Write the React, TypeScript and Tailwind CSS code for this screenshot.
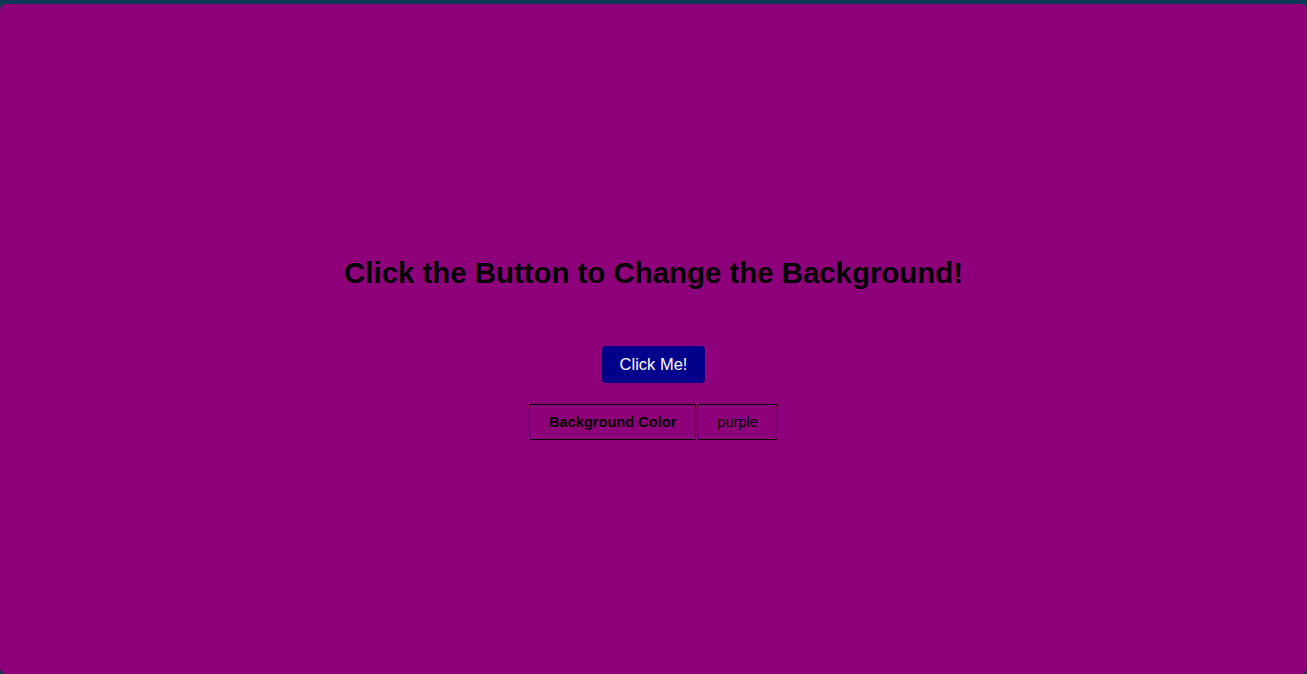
import { useState } from "react";

const colors = ["purple", "teal", "orange", "crimson"];
const hex: Record<string, string> = {
  purple: "#8e007a",
  teal: "#008080",
  orange: "#ffa500",
  crimson: "#dc143c",
};

export default function App() {
  const [idx, setIdx] = useState(0);
  const color = colors[idx];

  return (
    <div className="h-[674px] w-full bg-[#0c3a55] pt-[4px] font-['Liberation_Sans',Arial,sans-serif]">
      <div
        className="flex h-[670px] flex-col items-center rounded-[6px] pt-[252px] text-black"
        style={{ backgroundColor: hex[color] }}
      >
        <h1 className="text-[29.4px] font-bold leading-[33px]">
          Click the Button to Change the Background!
        </h1>
        <button
          onClick={() => setIdx((idx + 1) % colors.length)}
          className="mt-[57px] rounded-[4px] bg-[#00008b] px-[18px] py-[9px] text-[16.5px] leading-[19px] text-white"
        >
          Click Me!
        </button>
        <table className="mt-[20px] border-separate border-spacing-[1px] text-[14.6px]">
          <tbody>
            <tr>
              <th className="border border-black px-[19px] py-[9px] font-bold leading-[16px]">
                Background Color
              </th>
              <td className="border border-black px-[19px] py-[9px] leading-[16px]">
                {color}
              </td>
            </tr>
          </tbody>
        </table>
      </div>
    </div>
  );
}
